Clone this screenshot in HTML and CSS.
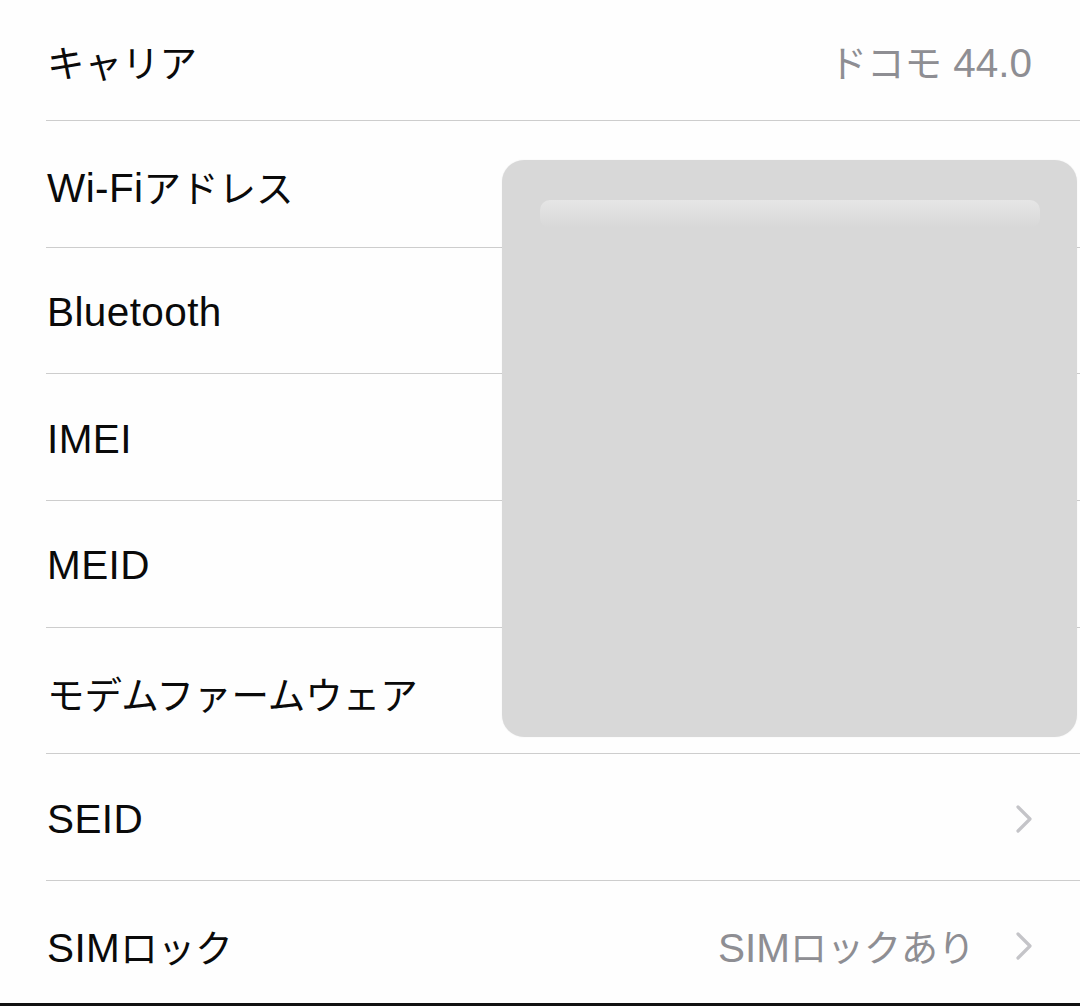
FILE: index.html
```html
<!DOCTYPE html>
<html lang="ja">
<head>
<meta charset="utf-8">
<link rel="stylesheet" href="styles.css">
</head>
<body>
<div class="screen">
  <ul class="list">
    <li class="row first"><span class="label"><span class="ja">キャリア</span></span><span class="value"><span class="ja">ドコモ</span> 44.0</span></li>
    <li class="row"><span class="label">Wi-Fi<span class="ja">アドレス</span></span></li>
    <li class="row"><span class="label">Bluetooth</span></li>
    <li class="row"><span class="label">IMEI</span></li>
    <li class="row"><span class="label">MEID</span></li>
    <li class="row"><span class="label"><span class="ja">モデムファームウェア</span></span></li>
    <li class="row"><span class="label">SEID</span><svg class="chev" viewBox="0 0 18 30"><path d="M3 3 L15 15 L3 27" /></svg></li>
    <li class="row last"><span class="label">SIM<span class="ja">ロック</span></span><span class="value lock">SIM<span class="ja">ロックあり</span></span><svg class="chev" viewBox="0 0 18 30"><path d="M3 3 L15 15 L3 27" /></svg></li>
  </ul>
  <div class="redact"><div class="redact-bar"></div></div>
  <div class="bottom-edge"></div>
</div>
</body>
</html>
```

FILE: styles.css
```css
html, body {
  margin: 0;
  padding: 0;
  background: #fefefe;
}
.screen {
  position: relative;
  width: 1080px;
  height: 1006px;
  overflow: hidden;
  background: #fefefe;
  font-family: "Liberation Sans", "Noto Sans CJK JP", sans-serif;
}
.list {
  list-style: none;
  margin: 0;
  padding: 0 0 0 46px;
}
.row {
  display: flex;
  align-items: center;
  height: 126.67px;
  box-sizing: border-box;
  border-top: 1.5px solid #cdcdcd;
  padding-right: 48px;
  padding-top: 4px;
}
.row.first {
  height: 120px;
  border-top: none;
  padding-top: 0;
}
.label {
  flex: 1;
  font-size: 40.5px;
  color: #0a0a0a;
  padding-left: 1px;
  letter-spacing: 0.4px;
  white-space: nowrap;
}
.ja {
  font-family: "Noto Sans CJK JP", sans-serif;
  font-size: 37.5px;
  letter-spacing: 0;
}
.value {
  font-size: 40.5px;
  color: #8e8e93;
  white-space: nowrap;
}
.value.lock {
  margin-right: 40px;
}
.value.lock .ja {
  font-size: 37px;
}
.chev {
  width: 18px;
  height: 30px;
  margin-right: -1px;
}
.chev path {
  fill: none;
  stroke: #c4c4c8;
  stroke-width: 3.2;
  stroke-linecap: round;
  stroke-linejoin: round;
}
.redact {
  position: absolute;
  left: 502px;
  top: 160px;
  width: 575px;
  height: 577px;
  border-radius: 22px;
  background: #d8d8d8;
  box-shadow: 0 0 2px rgba(0,0,0,0.06);
}
.redact-bar {
  position: absolute;
  left: 38px;
  top: 40px;
  width: 500px;
  height: 28px;
  border-radius: 10px;
  background: linear-gradient(#e6e6e6, #d8d8d8);
}
.bottom-edge {
  position: absolute;
  left: 0;
  right: 0;
  bottom: 0;
  height: 3px;
  background: #111;
}
```
